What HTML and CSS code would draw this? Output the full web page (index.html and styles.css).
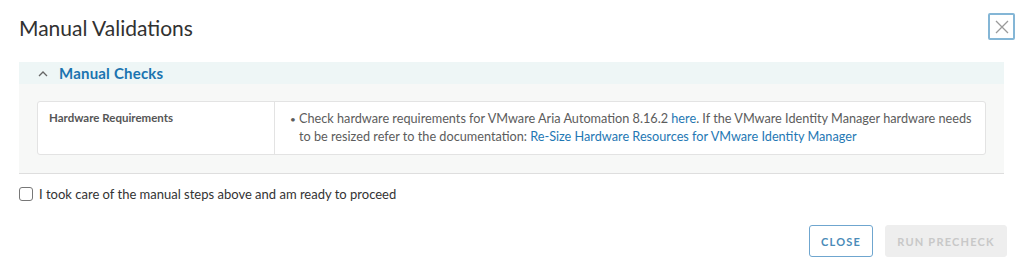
FILE: index.html
```html
<!DOCTYPE html>
<html>

<head>
    <meta charset="utf-8">
    <link rel="stylesheet" href="styles.css">
</head>

<body>
    <div class="modal">
        <div class="modal-header">
            <h3 class="modal-title">Manual Validations</h3>
            <button class="close-x" aria-label="Close">
                <svg width="16" height="16" viewBox="0 0 16 16">
                    <path d="M2 2 L14 14 M14 2 L2 14" stroke="#9a9a9a" stroke-width="1.3" fill="none" />
                </svg>
            </button>
        </div>

        <div class="panel">
            <div class="panel-header">
                <svg class="chevron" width="10" height="7" viewBox="0 0 10 7">
                    <path d="M1 6 L5 2 L9 6" stroke="#666" stroke-width="1.3" fill="none" />
                </svg>
                <span>Manual Checks</span>
            </div>
            <div class="panel-body">
                <div class="check-card">
                    <div class="check-name">Hardware Requirements</div>
                    <div class="check-desc">
                        <ul>
                            <li>Check hardware requirements for VMware Aria Automation 8.16.2 <a href="#">here</a>. If the VMware Identity Manager hardware needs to be resized refer to the documentation: <a href="#">Re-Size Hardware Resources for VMware Identity Manager</a></li>
                        </ul>
                    </div>
                </div>
            </div>
        </div>

        <label class="confirm">
            <span class="box"></span>
            I took care of the manual steps above and am ready to proceed
        </label>

        <div class="modal-footer">
            <button class="btn btn-outline">Close</button>
            <button class="btn btn-disabled" disabled>Run Precheck</button>
        </div>
    </div>
</body>

</html>
```

FILE: styles.css
```css
body {
    font-family: Lato, "Noto Sans", sans-serif;
    margin: 0;
    background: #fff;
    color: #565656;
}

.modal {
    width: 1024px;
    height: 273px;
    box-sizing: border-box;
    padding: 13px 0 0 19px;
}

.modal-header {
    display: flex;
    justify-content: space-between;
    align-items: flex-start;
    padding-right: 9px;
}

.modal-title {
    margin: 1px 0 0 0;
    font-size: 21px;
    font-weight: 400;
    color: #313131;
    line-height: 28px;
}

.close-x {
    width: 27px;
    height: 27px;
    margin: 0;
    padding: 0;
    border: 2px solid #84b6d6;
    border-radius: 2px;
    background: #fff;
    display: flex;
    align-items: center;
    justify-content: center;
}

.panel {
    margin: 20px 20px 0 0;
    border-bottom: 1px solid #dedede;
}

.panel-header {
    height: 22px;
    background: #eef6f6;
    display: flex;
    align-items: center;
    padding-left: 19px;
    gap: 11px;
    color: #1b74b0;
    font-size: 15px;
    font-weight: 700;
    letter-spacing: 0.2px;
}

.panel-body {
    background: #f7f8f7;
    padding: 17px 18px 18px 18px;
}

.check-card {
    display: flex;
    background: #fff;
    border: 1px solid #e3e3e3;
    border-radius: 3px;
    height: 54px;
    box-sizing: border-box;
}

.check-name {
    width: 237px;
    box-sizing: border-box;
    border-right: 1px solid #e3e3e3;
    padding: 9px 11px;
    font-size: 11.5px;
    font-weight: 700;
    color: #565656;
}

.check-desc {
    flex: 1;
    padding: 8px 8px 0 15px;
    font-size: 12.7px;
    line-height: 17px;
    color: #5c5c5c;
}

.check-desc ul {
    margin: 0;
    padding: 0;
}

.check-desc li {
    list-style: none;
    padding-left: 9px;
    text-indent: -9px;
}

.check-desc li::before {
    content: "\2022";
    display: inline-block;
    width: 9px;
    text-indent: 0;
    font-size: 10px;
}

.check-desc a {
    color: #1f78b4;
    text-decoration: none;
}

.confirm {
    display: flex;
    align-items: center;
    gap: 6px;
    margin-top: 12px;
    font-size: 13px;
    color: #333;
}

.confirm .box {
    width: 12px;
    height: 12px;
    border: 1px solid #777;
    border-radius: 3px;
}

.modal-footer {
    display: flex;
    justify-content: flex-end;
    gap: 12px;
    margin-top: 23px;
    padding-right: 17px;
}

.btn {
    height: 32px;
    font-family: inherit;
    font-size: 11px;
    font-weight: 700;
    letter-spacing: 1.2px;
    text-transform: uppercase;
    border-radius: 3px;
    padding: 0 10px;
}

.btn-outline {
    width: 64px;
    background: #fff;
    color: #4a8bb8;
    border: 1px solid #6fa6cf;
}

.btn-disabled {
    width: 122px;
    background: #eeeeee;
    color: #c8c8c8;
    border: 1px solid #eeeeee;
}
```
